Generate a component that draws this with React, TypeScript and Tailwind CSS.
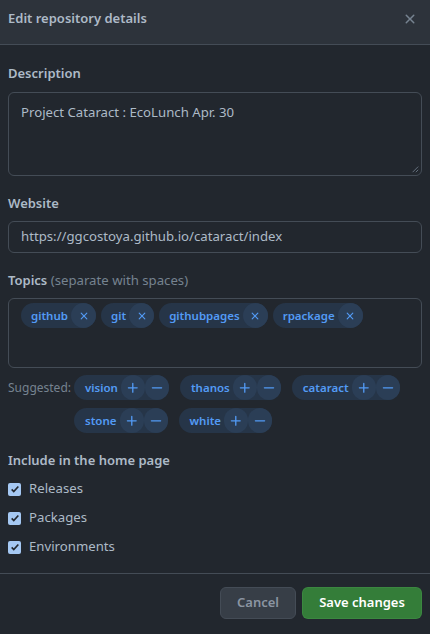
import React from 'react';

const topics = ['github', 'git', 'githubpages', 'rpackage'];
const suggested = [
  ['vision', 'thanos', 'cataract'],
  ['stone', 'white'],
];

const XIcon = ({ className }: { className?: string }) => (
  <svg viewBox="0 0 16 16" className={className} fill="currentColor">
    <path d="M3.72 3.72a.75.75 0 0 1 1.06 0L8 6.94l3.22-3.22a.75.75 0 1 1 1.06 1.06L9.06 8l3.22 3.22a.75.75 0 1 1-1.06 1.06L8 9.06l-3.22 3.22a.75.75 0 0 1-1.06-1.06L6.94 8 3.72 4.78a.75.75 0 0 1 0-1.06Z" />
  </svg>
);

const PlusIcon = () => (
  <svg viewBox="0 0 16 16" className="h-3.5 w-3.5" fill="currentColor">
    <path d="M7.75 2a.75.75 0 0 1 .75.75V7h4.25a.75.75 0 0 1 0 1.5H8.5v4.25a.75.75 0 0 1-1.5 0V8.5H2.75a.75.75 0 0 1 0-1.5H7V2.75A.75.75 0 0 1 7.75 2Z" />
  </svg>
);

const DashIcon = () => (
  <svg viewBox="0 0 16 16" className="h-3.5 w-3.5" fill="currentColor">
    <path d="M2 7.75A.75.75 0 0 1 2.75 7h10.5a.75.75 0 0 1 0 1.5H2.75A.75.75 0 0 1 2 7.75Z" />
  </svg>
);

const Check = () => (
  <span className="flex h-[13px] w-[13px] items-center justify-center rounded-[2px] bg-[#a5c8f3]">
    <svg viewBox="0 0 12 12" className="h-[10px] w-[10px]" fill="none" stroke="#22272e" strokeWidth="2">
      <path d="M2 6.5l2.5 2.5L10 3" />
    </svg>
  </span>
);

const App: React.FC = () => {
  return (
    <div
      className="flex h-[634px] w-[430px] flex-col bg-[#22272e] text-[#adbac7]"
      style={{ fontFamily: '"Noto Sans", "Open Sans", sans-serif' }}
    >
      <div className="flex h-[45px] items-center justify-between border-b border-[#444c56] bg-[#2d333b] pb-[6px] pl-2 pr-3">
        <h1 className="text-[13px] font-semibold">Edit repository details</h1>
        <XIcon className="h-4 w-4 text-[#768390]" />
      </div>

      <div className="flex flex-1 flex-col px-2 pt-[18px]">
        <label className="mb-[9px] text-[13px] font-semibold leading-5">Description</label>
        <div className="relative h-[84px] rounded-md border border-[#444c56] px-3 py-[9px] text-[13.2px] leading-5">
          Project Cataract : EcoLunch Apr. 30
          <svg viewBox="0 0 10 10" className="absolute bottom-[2px] right-[2px] h-2 w-2" stroke="#768390" strokeWidth="1">
            <path d="M9 2L2 9M9 6L6 9" />
          </svg>
        </div>

        <label className="mb-[8px] mt-[17px] text-[13px] font-semibold leading-5">Website</label>
        <div className="flex h-[32px] items-center rounded-md border border-[#444c56] px-3 text-[13.2px]">
          https://ggcostoya.github.io/cataract/index
        </div>

        <label className="mb-[8px] mt-[17px] text-[13.2px] leading-5">
          <span className="text-[13px] font-semibold">Topics</span>{' '}
          <span className="text-[#768390]">(separate with spaces)</span>
        </label>
        <div className="h-[70px] rounded-md border border-[#444c56] px-3 pt-[4px]">
          <div className="flex flex-wrap gap-[5px]">
            {topics.map((t) => (
              <span
                key={t}
                className="flex h-[25px] items-center rounded-full bg-[#263548] pl-[10px] text-[11.5px] font-semibold text-[#539bf5]"
              >
                {t}
                <span className="ml-[3px] flex h-[25px] w-[25px] items-center justify-center rounded-full bg-[#2b3e56]">
                  <XIcon className="h-3 w-3" />
                </span>
              </span>
            ))}
          </div>
        </div>

        <div className="mt-[7px] flex">
          <span className="mt-[4px] w-[66px] text-[12px] text-[#768390]">Suggested:</span>
          <div className="flex flex-col gap-[8px]">
            {suggested.map((row, i) => (
              <div key={i} className="flex gap-[11px]">
                {row.map((s) => (
                  <span
                    key={s}
                    className="flex h-[25px] items-center rounded-full bg-[#263548] pl-[11px] text-[11.5px] font-semibold text-[#539bf5]"
                  >
                    {s}
                    <span className="ml-[3px] flex h-[25px] w-[24px] items-center justify-center rounded-full bg-[#2b3e56]">
                      <PlusIcon />
                    </span>
                    <span className="flex h-[25px] w-[24px] items-center justify-center rounded-full bg-[#2b3e56]">
                      <DashIcon />
                    </span>
                  </span>
                ))}
              </div>
            ))}
          </div>
        </div>

        <label className="mb-[9px] mt-[17px] text-[13px] font-semibold leading-5">Include in the home page</label>
        <div className="flex flex-col gap-[9px]">
          {['Releases', 'Packages', 'Environments'].map((c) => (
            <div key={c} className="flex h-5 items-center gap-[8px] text-[13.2px]">
              <Check />
              <span>{c}</span>
            </div>
          ))}
        </div>
      </div>

      <div className="flex h-[61px] items-center justify-end gap-[6px] border-t border-[#444c56] px-2 pb-[2px]">
        <button className="h-[32px] w-[76px] rounded-md border border-[#444c56] bg-[#373e47] text-[13px] font-semibold text-[#8b95a2]">
          Cancel
        </button>
        <button className="h-[32px] w-[120px] rounded-md border border-[#46954a66] bg-[#347d39] text-[13px] font-semibold text-[#ffffff]">
          Save changes
        </button>
      </div>
    </div>
  );
};

export default App;
